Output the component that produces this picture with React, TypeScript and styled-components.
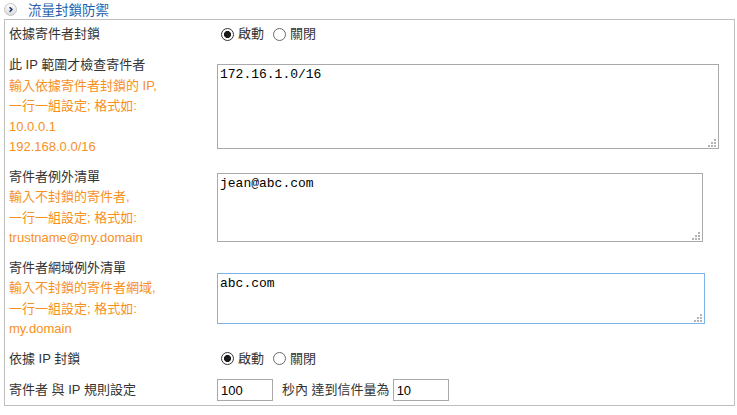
import React from "react";
import styled, { createGlobalStyle } from "styled-components";

const GlobalStyle = createGlobalStyle`
  html, body { margin: 0; padding: 0; background: #ffffff; }
  body { font-family: "Liberation Sans", "Noto Sans CJK TC", sans-serif; font-size: 13px; color: #333333; }
  * { box-sizing: border-box; }
`;

const Page = styled.div`
  width: 737px;
  height: 415px;
  overflow: hidden;
`;

const Header = styled.div`
  display: flex;
  align-items: flex-start;
  height: 19px;
  padding-left: 4px;
`;

const HeaderIcon = styled.svg`
  width: 13px;
  height: 13px;
  margin-top: 2.5px;
  flex: none;
`;

const Title = styled.div`
  margin-left: 11px;
  margin-top: 3px;
  line-height: 16px;
  font-size: 13.5px;
  color: #1f5fad;
`;

const Panel = styled.div`
  margin-left: 4px;
  width: 731px;
  height: 387px;
  border: 1px solid #bfbfbf;
  display: flex;
  flex-direction: column;
`;

const Row = styled.div<{ $pad: string }>`
  display: grid;
  grid-template-columns: 212px 1fr;
  align-items: center;
  padding: ${(p) => p.$pad};
`;

const LabelCell = styled.div`
  padding-left: 4px;
  line-height: 20.5px;
  color: #333333;
`;

const Hint = styled.div`
  color: #f7901e;
`;

const ControlCell = styled.div`
  display: flex;
  align-items: center;
  line-height: 20.5px;
`;

const RadioGroup = styled.div`
  display: flex;
  align-items: center;
  gap: 9px;
  padding-left: 4px;
`;

const RadioOption = styled.label`
  display: inline-flex;
  align-items: center;
  gap: 4px;
  color: #333333;
`;

const RadioInput = styled.input.attrs({ type: "radio" })`
  appearance: none;
  -webkit-appearance: none;
  margin: 0;
  width: 13px;
  height: 13px;
  border-radius: 50%;
  border: 1px solid #6a6a6a;
  background: #ffffff;
  &:checked {
    border-color: #333333;
    background: radial-gradient(circle, #1a1a1a 0 3.3px, #ffffff 3.8px);
  }
`;

const AreaWrap = styled.div<{ $w: number; $h: number }>`
  position: relative;
  width: ${(p) => p.$w}px;
  height: ${(p) => p.$h}px;
`;

const TextArea = styled.textarea<{ $focus?: boolean }>`
  display: block;
  width: 100%;
  height: 100%;
  margin: 0;
  padding: 2px;
  resize: none;
  outline: none;
  border: 1px solid ${(p) => (p.$focus ? "#7eb4ea" : "#a9a9a9")};
  font-family: "Liberation Mono", "Noto Sans CJK TC", monospace;
  font-size: 13px;
  line-height: 15px;
  color: #000000;
  background: #ffffff;
`;

const Grip = styled.svg`
  position: absolute;
  right: 3px;
  bottom: 2px;
  width: 8px;
  height: 8px;
  pointer-events: none;
`;

const NumberInput = styled.input.attrs({ type: "text" })`
  width: 56px;
  height: 22px;
  margin: 1px 0;
  padding: 1px 3px;
  border: 1px solid #a9a9a9;
  outline: none;
  font-family: "Liberation Sans", sans-serif;
  font-size: 13px;
  color: #000000;
`;

const InlineText = styled.span`
  margin: 0 3px 0 9px;
  color: #333333;
  white-space: pre;
`;

const GripDots = () => (
  <Grip viewBox="0 0 8 8">
    <g fill="#b4b4b4">
      <rect x="6" y="0" width="2" height="2" />
      <rect x="3" y="3" width="2" height="2" />
      <rect x="6" y="3" width="2" height="2" />
      <rect x="0" y="6" width="2" height="2" />
      <rect x="3" y="6" width="2" height="2" />
      <rect x="6" y="6" width="2" height="2" />
    </g>
  </Grip>
);

const Area = ({ w, h, value, focus }: { w: number; h: number; value: string; focus?: boolean }) => (
  <AreaWrap $w={w} $h={h}>
    <TextArea $focus={focus} defaultValue={value} />
    <GripDots />
  </AreaWrap>
);

const OnOff = ({ name }: { name: string }) => (
  <RadioGroup>
    <RadioOption>
      <RadioInput name={name} defaultChecked />
      啟動
    </RadioOption>
    <RadioOption>
      <RadioInput name={name} />
      關閉
    </RadioOption>
  </RadioGroup>
);

export default function App() {
  return (
    <Page>
      <GlobalStyle />
      <Header>
        <HeaderIcon viewBox="0 0 13 13">
          <defs>
            <linearGradient id="hg" x1="0" y1="0" x2="0" y2="1">
              <stop offset="0" stopColor="#ffffff" />
              <stop offset="1" stopColor="#d9d9d9" />
            </linearGradient>
          </defs>
          <circle cx="6.5" cy="6.5" r="6" fill="url(#hg)" stroke="#c6c6c6" strokeWidth="1" />
          <polyline points="5.6,4.2 7.9,6.5 5.6,8.8" fill="none" stroke="#1d3a70" strokeWidth="1.6" />
        </HeaderIcon>
        <Title>流量封鎖防禦</Title>
      </Header>
      <Panel>
        <Row $pad="4px 0 6px">
          <LabelCell>依據寄件者封鎖</LabelCell>
          <ControlCell>
            <OnOff name="sender" />
          </ControlCell>
        </Row>
        <Row $pad="4.5px 0">
          <LabelCell>
            此 IP 範圍才檢查寄件者
            <Hint>輸入依據寄件者封鎖的 IP,</Hint>
            <Hint>一行一組設定; 格式如:</Hint>
            <Hint>10.0.0.1</Hint>
            <Hint>192.168.0.0/16</Hint>
          </LabelCell>
          <ControlCell>
            <Area w={502} h={85} value="172.16.1.0/16" />
          </ControlCell>
        </Row>
        <Row $pad="4.5px 0">
          <LabelCell>
            寄件者例外清單
            <Hint>輸入不封鎖的寄件者,</Hint>
            <Hint>一行一組設定; 格式如:</Hint>
            <Hint>trustname@my.domain</Hint>
          </LabelCell>
          <ControlCell>
            <Area w={486} h={69} value="jean@abc.com" />
          </ControlCell>
        </Row>
        <Row $pad="4.5px 0">
          <LabelCell>
            寄件者網域例外清單
            <Hint>輸入不封鎖的寄件者網域,</Hint>
            <Hint>一行一組設定; 格式如:</Hint>
            <Hint>my.domain</Hint>
          </LabelCell>
          <ControlCell>
            <Area w={488} h={51} value="abc.com" focus />
          </ControlCell>
        </Row>
        <Row $pad="4.5px 0">
          <LabelCell>依據 IP 封鎖</LabelCell>
          <ControlCell>
            <OnOff name="ip" />
          </ControlCell>
        </Row>
        <Row $pad="4.5px 0 3px">
          <LabelCell>寄件者 與 IP 規則設定</LabelCell>
          <ControlCell>
            <NumberInput defaultValue="100" />
            <InlineText>秒內 達到信件量為</InlineText>
            <NumberInput defaultValue="10" />
          </ControlCell>
        </Row>
      </Panel>
    </Page>
  );
}
